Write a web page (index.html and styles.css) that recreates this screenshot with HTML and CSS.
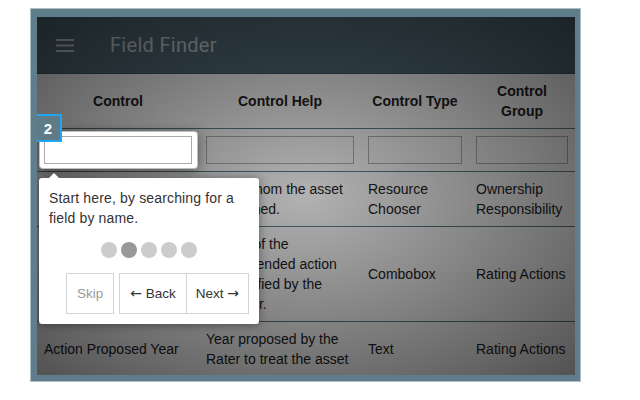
FILE: index.html
```html
<!DOCTYPE html>
<html lang="en">
<head>
<meta charset="utf-8">
<title>Field Finder</title>
<link rel="stylesheet" href="styles.css">
</head>
<body>
<div class="frame">
  <div class="screen">
    <header class="toolbar">
      <svg class="menu" width="18" height="13" viewBox="0 0 18 13" aria-hidden="true">
        <rect x="0" y="0" width="18" height="2"/>
        <rect x="0" y="5.5" width="18" height="2"/>
        <rect x="0" y="11" width="18" height="2"/>
      </svg>
      <span class="title">Field Finder</span>
    </header>
    <table class="grid">
      <colgroup>
        <col class="c-control">
        <col class="c-help">
        <col class="c-type">
        <col class="c-group">
      </colgroup>
      <thead>
        <tr>
          <th>Control</th>
          <th>Control Help</th>
          <th>Control Type</th>
          <th>Control Group</th>
        </tr>
        <tr class="filters">
          <td><input class="filter filter-active" type="text"></td>
          <td><input class="filter" type="text"></td>
          <td><input class="filter" type="text"></td>
          <td><input class="filter" type="text"></td>
        </tr>
      </thead>
      <tbody>
        <tr>
          <td>Asset Owner</td>
          <td class="lines">Lot to whom the asset<br>is assigned.</td>
          <td>Resource Chooser</td>
          <td>Ownership Responsibility</td>
        </tr>
        <tr>
          <td>Action Type</td>
          <td class="lines">Priority of the<br>recommended action<br>as specified by the<br>Assessor.</td>
          <td>Combobox</td>
          <td>Rating Actions</td>
        </tr>
        <tr>
          <td>Action Proposed Year</td>
          <td>Year proposed by the Rater to treat the asset</td>
          <td>Text</td>
          <td>Rating Actions</td>
        </tr>
      </tbody>
    </table>

    <div class="overlay"></div>
    <div class="helper"></div>
    <div class="step-badge">2</div>

    <div class="tour-tip">
      <div class="tour-text">Start here, by searching for a field by name.</div>
      <div class="bullets">
        <span class="dot"></span>
        <span class="dot dot-active"></span>
        <span class="dot"></span>
        <span class="dot"></span>
        <span class="dot"></span>
      </div>
      <div class="tour-buttons">
        <button class="btn btn-skip" type="button">Skip</button>
        <div class="btn-group">
          <button class="btn btn-back" type="button"><span class="arrow">&larr;</span> Back</button>
          <button class="btn" type="button">Next <span class="arrow">&rarr;</span></button>
        </div>
      </div>
    </div>
  </div>
</div>
</body>
</html>
```

FILE: styles.css
```css
* {
  box-sizing: border-box;
}

html, body {
  margin: 0;
  padding: 0;
  background: #ffffff;
}

body {
  font-family: "Liberation Sans", Arial, sans-serif;
  font-size: 14px;
  color: #333333;
}

.frame {
  width: 551px;
  margin: 8px 0 0 30px;
  border: 1px solid #b0bec5;
  background: #607d8b;
  padding: 8px 5px 6px 6px;
}

.screen {
  position: relative;
  width: 538px;
  height: 358px;
  overflow: hidden;
  background: #ffffff;
}

/* toolbar */
.toolbar {
  height: 57px;
  background: #546e7a;
  display: flex;
  align-items: center;
  padding-left: 19px;
  border-bottom: 1px solid #455a64;
}

.menu {
  fill: rgba(255, 255, 255, 0.72);
  display: block;
}

.title {
  margin-left: 36px;
  font-family: Roboto, "Liberation Sans", sans-serif;
  font-size: 20px;
  color: rgba(255, 255, 255, 0.72);
  letter-spacing: 0.3px;
}

/* table */
.grid {
  width: 538px;
  border-collapse: collapse;
  table-layout: fixed;
  color: #222222;
}

.c-control { width: 162px; }
.c-help { width: 162px; }
.c-type { width: 108px; }
.c-group { width: 106px; }

.grid th,
.grid td {
  padding: 7px;
  line-height: 20px;
  border-bottom: 1px solid #607d8b;
  vertical-align: middle;
  text-align: left;
  font-size: 14px;
}

.grid th {
  text-align: center;
  font-weight: bold;
}

.grid td.lines {
  white-space: nowrap;
}

.filter {
  display: block;
  width: 100%;
  height: 28px;
  margin: 0;
  border: 1px solid #b3b3b3;
  background: #ffffff;
  padding: 0 4px;
  font: inherit;
}

.filter-active {
  position: relative;
  z-index: 3;
  border-color: #a9a9a9;
}

/* tour layers */
.overlay {
  position: absolute;
  inset: 0;
  z-index: 1;
  background: radial-gradient(ellipse farthest-corner at center, rgba(0, 0, 0, 0.3) 0%, rgba(0, 0, 0, 0.68) 100%);
}

.helper {
  position: absolute;
  left: 2px;
  top: 114px;
  width: 159px;
  height: 38px;
  z-index: 2;
  background: #ffffff;
  border: 1px solid rgba(0, 0, 0, 0.25);
  border-radius: 4px;
  box-shadow: 0 2px 12px rgba(0, 0, 0, 0.4);
}

.step-badge {
  position: absolute;
  left: -3px;
  top: 97px;
  width: 28px;
  height: 28px;
  z-index: 5;
  border: 2px solid #1ea6ee;
  background: #5f7b88;
  color: #ffffff;
  font-weight: bold;
  font-size: 15px;
  display: flex;
  align-items: center;
  justify-content: center;
}

.tour-tip {
  position: absolute;
  left: 2px;
  top: 161px;
  width: 220px;
  z-index: 4;
  background: #ffffff;
  border-radius: 3px;
  padding: 10px;
  box-shadow: 0 1px 10px rgba(0, 0, 0, 0.4);
}

.tour-tip::before {
  content: "";
  position: absolute;
  top: -10px;
  left: 10px;
  border: 5px solid transparent;
  border-bottom-color: #ffffff;
}

.tour-text {
  font-size: 14px;
  line-height: 20px;
  color: #333333;
  letter-spacing: 0.15px;
}

.bullets {
  display: flex;
  justify-content: center;
  gap: 4px;
  margin-top: 14px;
  height: 16px;
}

.dot {
  width: 16px;
  height: 16px;
  border-radius: 50%;
  background: #cccccc;
}

.dot-active {
  background: #999999;
}

.tour-buttons {
  display: flex;
  justify-content: flex-end;
  gap: 5px;
  margin-top: 15px;
}

.btn-group {
  display: flex;
}

.btn {
  font-family: "Liberation Sans", Arial, sans-serif;
  font-size: 13.5px;
  line-height: 20px;
  padding: 9px 9px;
  border: 1px solid #d4d4d4;
  background: #ffffff;
  color: #333333;
  margin: 0;
  border-radius: 0;
  white-space: nowrap;
}

.btn-skip,
.btn-back {
  padding-left: 10px;
  padding-right: 10px;
}

.arrow {
  font-family: "DejaVu Sans", sans-serif;
  font-size: 14px;
}

.btn-group .btn + .btn {
  border-left: none;
}

.btn-skip {
  color: #9a9a9a;
}
```
